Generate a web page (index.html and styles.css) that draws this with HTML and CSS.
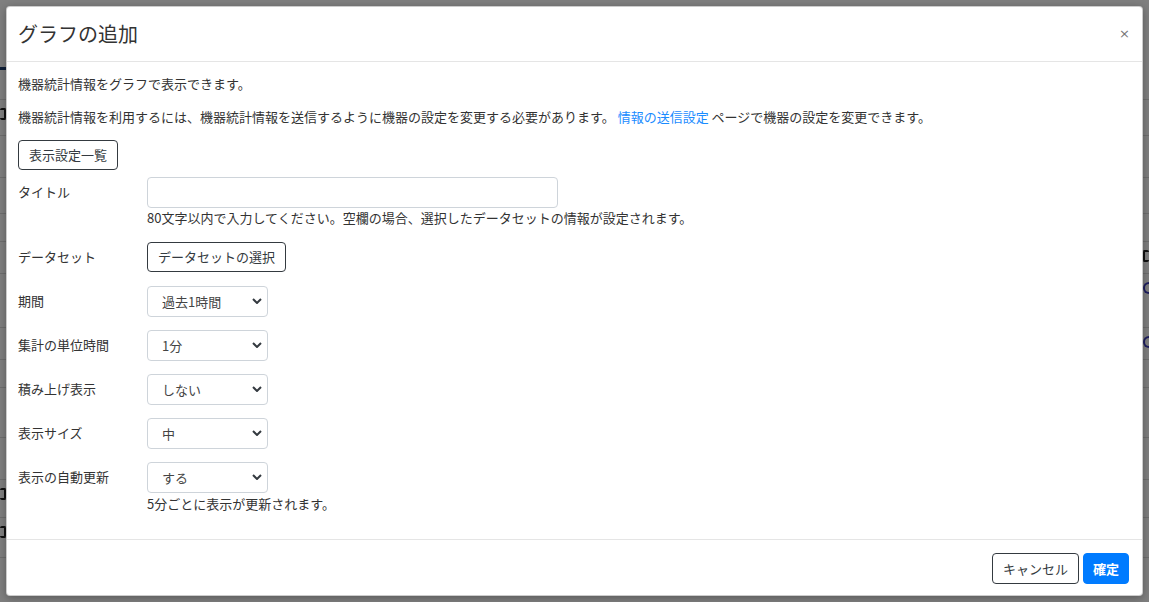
FILE: index.html
```html
<!DOCTYPE html>
<html lang="ja">
<head>
<meta charset="utf-8">
<title>グラフの追加</title>
<link rel="stylesheet" href="styles.css">
</head>
<body>
<div class="page">
  <div class="page-head"><span class="page-link"></span></div>
  <div class="page-rows">
    <div class="prow r1"></div>
    <div class="prow r2"><span class="mark left"></span></div>
    <div class="prow r3"></div>
    <div class="prow r4"></div>
    <div class="prow r5"></div>
    <div class="prow r6"><span class="mark right"></span></div>
    <div class="prow r7"><span class="mark right dot"></span></div>
    <div class="prow r8"><span class="mark right dot"></span></div>
    <div class="prow r9"></div>
    <div class="prow r10"></div>
    <div class="prow r11"></div>
    <div class="prow r12"><span class="mark left"></span></div>
    <div class="prow r13"><span class="mark left"></span></div>
  </div>
</div>

<div class="backdrop">
  <div class="modal">
    <div class="modal-header">
      <h5 class="modal-title">グラフの追加</h5>
      <button class="close" type="button">×</button>
    </div>
    <div class="modal-body">
      <p>機器統計情報をグラフで表示できます。</p>
      <p>機器統計情報を利用するには、機器統計情報を送信するように機器の設定を変更する必要があります。 <a href="#" class="link">情報の送信設定</a> ページで機器の設定を変更できます。</p>
      <button class="btn btn-outline" type="button">表示設定一覧</button>

      <div class="form">
        <div class="form-row">
          <label class="form-label">タイトル</label>
          <div class="form-field">
            <input class="text-input" type="text">
            <div class="help">80文字以内で入力してください。空欄の場合、選択したデータセットの情報が設定されます。</div>
          </div>
        </div>
        <div class="form-row">
          <label class="form-label">データセット</label>
          <div class="form-field">
            <button class="btn btn-outline" type="button">データセットの選択</button>
          </div>
        </div>
        <div class="form-row">
          <label class="form-label">期間</label>
          <div class="form-field">
            <div class="select-wrap">
              <select class="select"><option>過去1時間</option></select>
              <svg class="chev" viewBox="0 0 10 6" width="10" height="6"><path d="M1 1 L5 5 L9 1" fill="none" stroke="#343a40" stroke-width="2"/></svg>
            </div>
          </div>
        </div>
        <div class="form-row">
          <label class="form-label">集計の単位時間</label>
          <div class="form-field">
            <div class="select-wrap">
              <select class="select"><option>1分</option></select>
              <svg class="chev" viewBox="0 0 10 6" width="10" height="6"><path d="M1 1 L5 5 L9 1" fill="none" stroke="#343a40" stroke-width="2"/></svg>
            </div>
          </div>
        </div>
        <div class="form-row">
          <label class="form-label">積み上げ表示</label>
          <div class="form-field">
            <div class="select-wrap">
              <select class="select"><option>しない</option></select>
              <svg class="chev" viewBox="0 0 10 6" width="10" height="6"><path d="M1 1 L5 5 L9 1" fill="none" stroke="#343a40" stroke-width="2"/></svg>
            </div>
          </div>
        </div>
        <div class="form-row">
          <label class="form-label">表示サイズ</label>
          <div class="form-field">
            <div class="select-wrap">
              <select class="select"><option>中</option></select>
              <svg class="chev" viewBox="0 0 10 6" width="10" height="6"><path d="M1 1 L5 5 L9 1" fill="none" stroke="#343a40" stroke-width="2"/></svg>
            </div>
          </div>
        </div>
        <div class="form-row">
          <label class="form-label">表示の自動更新</label>
          <div class="form-field">
            <div class="select-wrap">
              <select class="select"><option>する</option></select>
              <svg class="chev" viewBox="0 0 10 6" width="10" height="6"><path d="M1 1 L5 5 L9 1" fill="none" stroke="#343a40" stroke-width="2"/></svg>
            </div>
            <div class="help help-last">5分ごとに表示が更新されます。</div>
          </div>
        </div>
      </div>
    </div>
    <div class="modal-footer">
      <button class="btn btn-outline" type="button">キャンセル</button>
      <button class="btn btn-primary" type="button">確定</button>
    </div>
  </div>
</div>
</body>
</html>
```
FILE: styles.css
```css
* { box-sizing: border-box; }

html, body {
  margin: 0;
  padding: 0;
  width: 1149px;
  height: 602px;
  overflow: hidden;
}

body {
  font-family: "Noto Sans CJK JP", "Noto Sans", "Liberation Sans", sans-serif;
  font-size: 13px;
  line-height: 20px;
  color: #333;
  background: #fff;
  position: relative;
}

/* background page (behind the backdrop) */
.page {
  width: 1149px;
  height: 602px;
  background: #fff;
}

.page-head {
  height: 72px;
  padding-top: 50px;
}

.page-link {
  display: block;
  width: 30px;
  height: 20px;
  border-bottom: 3px solid #1a3d6e;
}

.prow {
  border-bottom: 1px solid #dcdcdc;
  position: relative;
}

.mark {
  position: absolute;
  top: 8px;
  width: 6px;
  height: 12px;
  border: 2px solid #222;
  border-radius: 2px;
}

.mark.left { left: 0; border-left: 0; }
.mark.right { right: 0; border-right: 0; }
.mark.dot { border-color: #3b3bbf; border-radius: 6px 0 0 6px; }

.r1 { height: 28px; }
.r2 { height: 36px; }
.r3 { height: 42px; }
.r4 { height: 36px; }
.r5 { height: 28px; }
.r6 { height: 32px; }
.r7 { height: 54px; }
.r8 { height: 32px; }
.r9 { height: 28px; }
.r10 { height: 50px; }
.r11 { height: 42px; }
.r12 { height: 38px; }
.r13 { height: 40px; }

/* overlay */
.backdrop {
  position: absolute;
  inset: 0;
  background: rgba(0, 0, 0, 0.5);
  padding: 6px 6px 5px 6px;
}

.modal {
  width: 1137px;
  background: #fff;
  border: 1px solid rgba(0, 0, 0, 0.2);
  border-radius: 4px;
  box-shadow: 0 2px 8px rgba(0, 0, 0, 0.3);
  display: flex;
  flex-direction: column;
}

.modal-header {
  display: flex;
  align-items: center;
  justify-content: space-between;
  padding: 11px 12px 12px 11px;
  border-bottom: 1px solid #e5e5e5;
}

.modal-title {
  margin: 0;
  font-size: 20px;
  line-height: 31px;
  font-weight: 400;
  color: #333;
}

.close {
  background: none;
  border: 0;
  padding: 0;
  margin: 0;
  font-family: "DejaVu Sans", sans-serif;
  font-size: 13px;
  line-height: 20px;
  color: #777;
  cursor: pointer;
}

.modal-body {
  padding: 12px 11px 25px 11px;
}

.modal-body p {
  margin: 0 0 13px 0;
}

.link {
  color: #1a8cff;
  text-decoration: none;
}

.btn {
  font-family: inherit;
  font-size: 13px;
  line-height: 20px;
  height: 30px;
  padding: 4px 10px;
  border-radius: 4px;
  cursor: pointer;
}

.btn-outline {
  background: #fff;
  color: #343a40;
  border: 1px solid #343a40;
}

.btn-primary {
  background: #007bff;
  color: #fff;
  border: 1px solid #007bff;
  font-weight: 700;
  padding: 4px 9px;
}

.form {
  margin-top: 7px;
  display: flex;
  flex-direction: column;
  gap: 14px;
}

.form-row {
  display: flex;
  align-items: flex-start;
}

.form-label {
  width: 129px;
  flex: none;
  line-height: 30px;
  color: #333;
}

.form-field {
  display: flex;
  flex-direction: column;
  align-items: flex-start;
}

.text-input {
  width: 411px;
  height: 31px;
  border: 1px solid #ced4da;
  border-radius: 4px;
  padding: 4px 12px;
  font-family: inherit;
  font-size: 13px;
  color: #333;
  background: #fff;
}

.help {
  line-height: 20px;
  color: #333;
}

.help-last {
  margin-top: 2px;
}

.select-wrap {
  position: relative;
  width: 121px;
  height: 30px;
}

.select {
  appearance: none;
  -webkit-appearance: none;
  width: 121px;
  height: 31px;
  border: 1px solid #ced4da;
  border-radius: 4px;
  background: #fff;
  padding: 4px 24px 4px 14px;
  font-family: inherit;
  font-size: 13px;
  line-height: 20px;
  color: #444;
}

.chev {
  position: absolute;
  right: 6px;
  top: 12px;
  pointer-events: none;
}

.modal-footer {
  display: flex;
  justify-content: flex-end;
  align-items: center;
  gap: 4px;
  border-top: 1px solid #e5e5e5;
  padding: 13px 13px 11px 12px;
}

.modal-footer .btn {
  height: 31px;
}
```
